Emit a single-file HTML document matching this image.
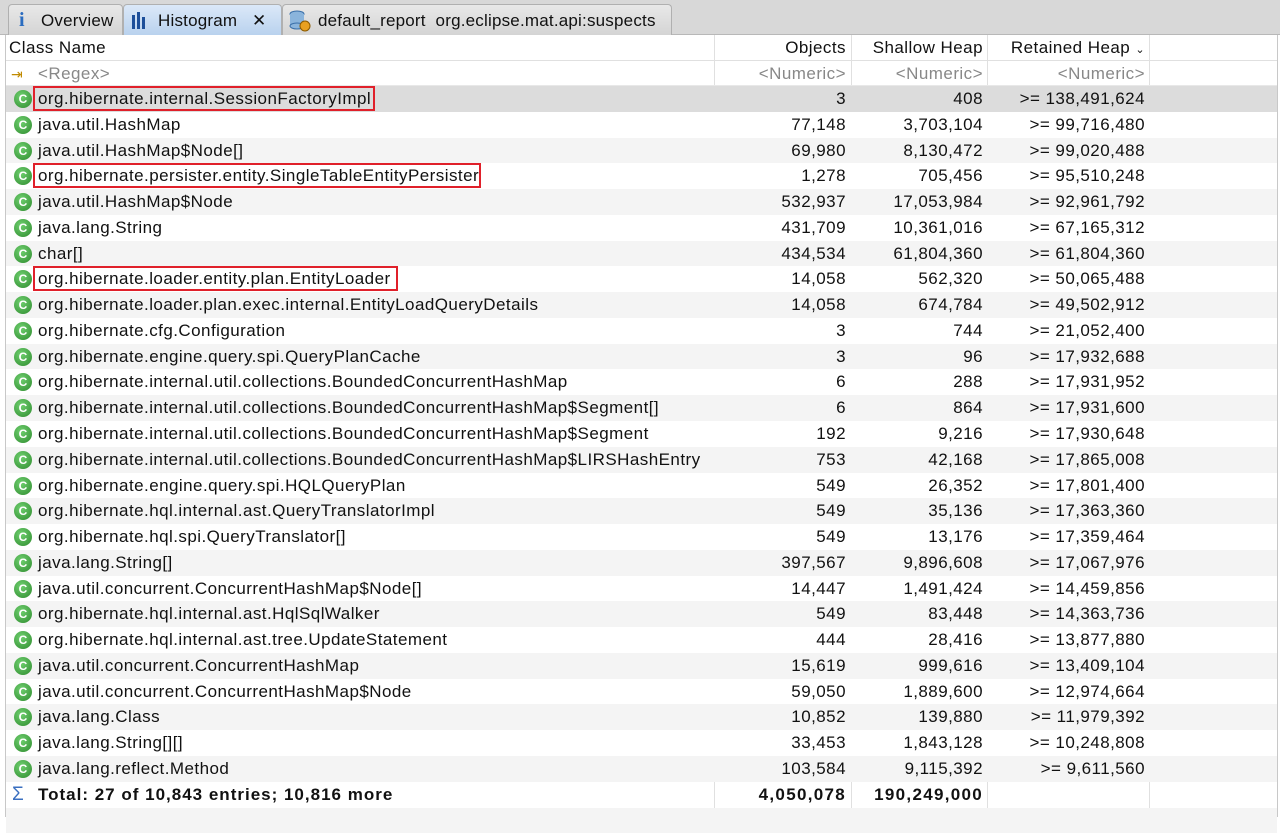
<!DOCTYPE html>
<html><head><meta charset="utf-8"><style>
*{margin:0;padding:0;box-sizing:border-box}
body{width:1280px;height:817px;overflow:hidden;background:#fff;font-family:"Liberation Sans",Arial,sans-serif;font-size:17px;letter-spacing:0.45px;color:#111;position:relative}
#tabs{position:absolute;left:0;top:0;width:1280px;height:35px;background:#d8d8d8;border-bottom:1px solid #b8b8b8}
.tab{position:absolute;top:4px;height:31px;border:1px solid #b0b0b0;border-bottom:none;border-radius:4px 4px 0 0;background:linear-gradient(#e8e8e8,#d4d4d4);line-height:31px;font-size:17px;letter-spacing:0.2px}
.tab.act{background:linear-gradient(#dbe8f8,#b9d2ee);}
#frame{position:absolute;left:5px;top:35px;width:1273px;height:782px;border-left:1px solid #c8c8c8;border-right:1px solid #c8c8c8}
.row{position:absolute;left:6px;width:1271px;height:25.77px;line-height:26px}
.c{position:absolute;top:0;height:100%;white-space:nowrap}
.n{position:absolute;left:32px}
.vl{position:absolute;top:35px;height:782px;width:1px;background:#e0e0e0}
.ic{position:absolute;left:8px;top:4px;width:18px;height:18px;border-radius:50%;background:radial-gradient(circle at 40% 35%,#6fcf6f,#2e8b2e);color:#fff;font-size:12px;font-weight:bold;line-height:18px;text-align:center;letter-spacing:0}
.box{position:absolute;border:2px solid #e0202a}
</style></head><body>
<div id="tabs">
 <div class="tab" style="left:8px;width:115px"><span style="position:absolute;left:10px;color:#2a6cc0;font-weight:bold;font-family:'Liberation Serif',serif;font-size:20px">i</span><span style="position:absolute;left:32px">Overview</span></div>
 <div class="tab act" style="left:123px;width:159px"><svg style="position:absolute;left:8px;top:7px" width="16" height="17"><rect x="0" y="3" width="3" height="14" fill="#1d4f9a"/><rect x="5" y="0" width="3" height="17" fill="#1d4f9a"/><rect x="10" y="5" width="3" height="12" fill="#1d4f9a"/></svg><span style="position:absolute;left:34px">Histogram</span><span style="position:absolute;left:128px;top:0;font-size:17px">✕</span></div>
 <div class="tab" style="left:282px;width:390px"><svg style="position:absolute;left:5px;top:4px" width="24" height="24"><ellipse cx="9" cy="5" rx="7" ry="3" fill="#8ab4dc" stroke="#3a6fa8"/><rect x="2" y="5" width="14" height="12" fill="#8ab4dc"/><ellipse cx="9" cy="17" rx="7" ry="3" fill="#8ab4dc" stroke="#3a6fa8"/><circle cx="17" cy="17" r="5" fill="#e8a020" stroke="#8a5a00"/></svg><span style="position:absolute;left:35px">default_report&nbsp; org.eclipse.mat.api:suspects</span></div>
</div>
<div id="frame"></div>
<div class="vl" style="left:714px"></div><div class="vl" style="left:851px"></div><div class="vl" style="left:987px"></div><div class="vl" style="left:1149px"></div>
<div id="rows"></div>
<div class="box" style="left:33px;top:86px;width:342px;height:25px"></div>
<div class="box" style="left:33px;top:163px;width:448px;height:25px"></div>
<div class="box" style="left:33px;top:266px;width:365px;height:25px"></div>
<script>
var d=[["org.hibernate.internal.SessionFactoryImpl","3","408",">= 138,491,624"],
["java.util.HashMap","77,148","3,703,104",">= 99,716,480"],
["java.util.HashMap$Node[]","69,980","8,130,472",">= 99,020,488"],
["org.hibernate.persister.entity.SingleTableEntityPersister","1,278","705,456",">= 95,510,248"],
["java.util.HashMap$Node","532,937","17,053,984",">= 92,961,792"],
["java.lang.String","431,709","10,361,016",">= 67,165,312"],
["char[]","434,534","61,804,360",">= 61,804,360"],
["org.hibernate.loader.entity.plan.EntityLoader","14,058","562,320",">= 50,065,488"],
["org.hibernate.loader.plan.exec.internal.EntityLoadQueryDetails","14,058","674,784",">= 49,502,912"],
["org.hibernate.cfg.Configuration","3","744",">= 21,052,400"],
["org.hibernate.engine.query.spi.QueryPlanCache","3","96",">= 17,932,688"],
["org.hibernate.internal.util.collections.BoundedConcurrentHashMap","6","288",">= 17,931,952"],
["org.hibernate.internal.util.collections.BoundedConcurrentHashMap$Segment[]","6","864",">= 17,931,600"],
["org.hibernate.internal.util.collections.BoundedConcurrentHashMap$Segment","192","9,216",">= 17,930,648"],
["org.hibernate.internal.util.collections.BoundedConcurrentHashMap$LIRSHashEntry","753","42,168",">= 17,865,008"],
["org.hibernate.engine.query.spi.HQLQueryPlan","549","26,352",">= 17,801,400"],
["org.hibernate.hql.internal.ast.QueryTranslatorImpl","549","35,136",">= 17,363,360"],
["org.hibernate.hql.spi.QueryTranslator[]","549","13,176",">= 17,359,464"],
["java.lang.String[]","397,567","9,896,608",">= 17,067,976"],
["java.util.concurrent.ConcurrentHashMap$Node[]","14,447","1,491,424",">= 14,459,856"],
["org.hibernate.hql.internal.ast.HqlSqlWalker","549","83,448",">= 14,363,736"],
["org.hibernate.hql.internal.ast.tree.UpdateStatement","444","28,416",">= 13,877,880"],
["java.util.concurrent.ConcurrentHashMap","15,619","999,616",">= 13,409,104"],
["java.util.concurrent.ConcurrentHashMap$Node","59,050","1,889,600",">= 12,974,664"],
["java.lang.Class","10,852","139,880",">= 11,979,392"],
["java.lang.String[][]","33,453","1,843,128",">= 10,248,808"],
["java.lang.reflect.Method","103,584","9,115,392",">= 9,611,560"]];
var h='';
function cols(a,b,c,style){return '<span class="c" style="right:'+(1271-840)+'px;'+style+'">'+a+'</span><span class="c" style="right:'+(1271-977)+'px;'+style+'">'+b+'</span><span class="c" style="right:'+(1271-1139)+'px;'+style+'">'+c+'</span>';}
h+='<div class="row" style="top:35px;border-bottom:1px solid #e0e0e0"><span class="c" style="left:3px">Class Name</span>'+cols('Objects','Shallow Heap','Retained Heap <span style="font-size:11px">&#8964;</span>','')+'</div>';
h+='<div class="row" style="top:60.5px;border-bottom:1px solid #e8e8e8"><span class="c" style="left:5px;color:#c08a00;font-size:14px">&#8677;</span><span class="c n" style="color:#888">&lt;Regex&gt;</span>'+cols('&lt;Numeric&gt;','&lt;Numeric&gt;','&lt;Numeric&gt;','color:#888')+'</div>';
for(var i=0;i<d.length;i++){var r=d[i];var bg=i==0?'#dcdcdc':(i%2==0?'#f4f4f4':'#fff');
h+='<div class="row" style="top:'+(86+i*25.77)+'px;background:'+bg+'"><span class="ic">C</span><span class="c n">'+r[0]+'</span>'+cols(r[1],r[2],r[3],'')+'</div>';}
h+='<div class="row" style="top:'+(86+27*25.77)+'px;font-weight:bold"><span class="c" style="left:6px;color:#3a6fc0;font-size:19px;font-weight:normal">&Sigma;</span><span class="c n" style="letter-spacing:1px">Total: 27 of 10,843 entries; 10,816 more</span>'+cols('4,050,078','190,249,000','','letter-spacing:1.3px')+'</div>';
h+='<div class="row" style="top:'+(86+28*25.77)+'px;background:#f4f4f4"></div>';
document.getElementById('rows').innerHTML=h;
</script>
</body></html>
